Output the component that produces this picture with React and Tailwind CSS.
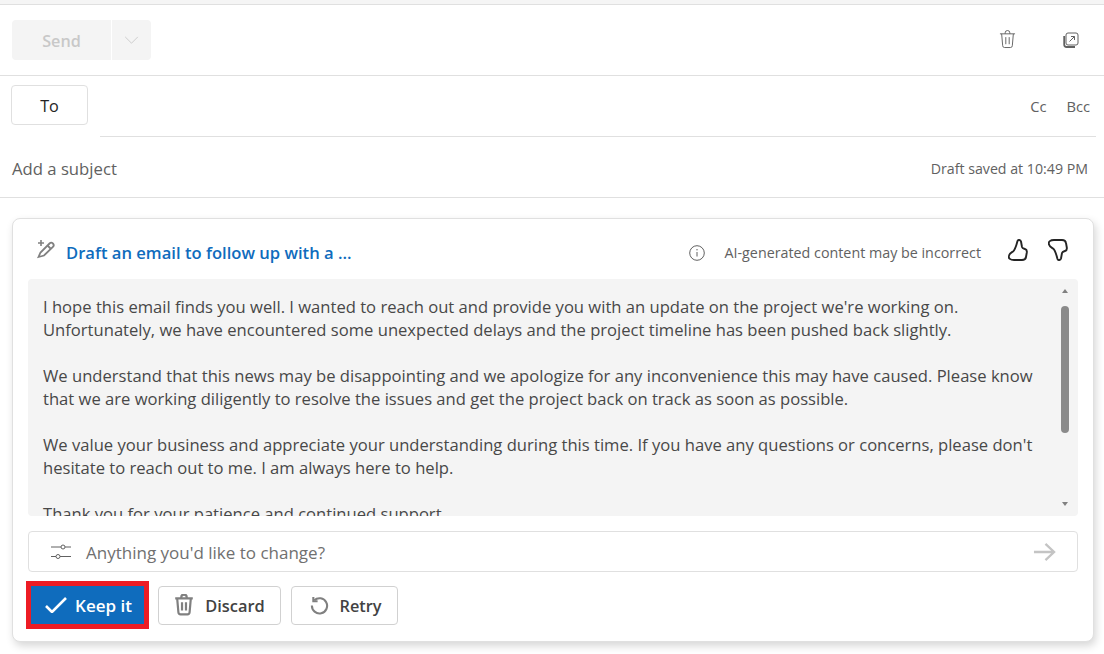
const font = { fontFamily: '"Open Sans", "Noto Sans", sans-serif' };

const TrashIcon = ({ className, stroke = 1 }) => (
  <svg viewBox="0 0 18 20" fill="none" stroke="currentColor" strokeWidth={stroke} className={className}>
    <path d="M1 4h16M6.500 4V3a2.500 2.500 0 0 1 5 0v1M2.800 4l1.100 12.600A2 2 0 0 0 5.900 18.500h6.200a2 2 0 0 0 2-1.900L15.200 4M7.200 7.500v7.500M10.800 7.500v7.500" />
  </svg>
);

const PopoutIcon = ({ className }) => (
  <svg viewBox="0 0 16 16" fill="none" stroke="currentColor" className={className}>
    <rect x="3" y="1" width="12" height="12" rx="2" />
    <path d="M1.200 4v8.500A2.500 2.500 0 0 0 3.700 15H12" strokeWidth="1.800" />
    <path d="M6.500 9.500 11.500 4.500M8 4.500h3.500V8" />
  </svg>
);

const SparkPenIcon = ({ className }) => (
  <svg viewBox="0 0 20 20" fill="none" stroke="currentColor" strokeWidth="1.800" className={className}>
    <path d="M2.500 18 4.500 13.500 13.500 4.500a2.400 2.400 0 0 1 3.400 3.400L8 16.500z" />
    <path d="M11.500 6.500l3 3" />
    <path d="M5 1v6M2 4h6" strokeWidth="1.600" />
  </svg>
);

const ThumbUpIcon = ({ className }) => (
  <svg viewBox="0 0 20 22" fill="none" stroke="currentColor" strokeWidth="1.900" strokeLinejoin="round" className={className}>
    <path d="M9.500 2C10 .5 12.500.5 13 2.500L14 8c.5 1.500 1.500 1.500 3 2 2 .5 2 2 1.800 3.500L18 18c-.3 2-2 3-4 3H6c-3.500 0-6-1.500-5-4.500.5-2 2.500-3 4-4 2-1.500 3.500-6.500 4.500-10.500z" />
  </svg>
);

const SlidersIcon = ({ className }) => (
  <svg viewBox="0 0 20 16" fill="none" stroke="currentColor" className={className}>
    <path d="M0 3h10M14 3h6M0 12.500h5M9 12.500h11" />
    <circle cx="12" cy="3" r="2" />
    <circle cx="7" cy="12.500" r="2" />
  </svg>
);

const ArrowIcon = ({ className }) => (
  <svg viewBox="0 0 24 20" fill="none" stroke="currentColor" strokeWidth="2.400" className={className}>
    <path d="M1 10h21M13 1.500 22 10l-9 8.500" />
  </svg>
);

const CheckIcon = ({ className }) => (
  <svg viewBox="0 0 22 16" fill="none" stroke="currentColor" strokeWidth="2.600" className={className}>
    <path d="M1 9l6 6L21 1" />
  </svg>
);

const RetryIcon = ({ className }) => (
  <svg viewBox="0 0 20 20" fill="none" stroke="currentColor" strokeWidth="2.200" className={className}>
    <path d="M4.500 4.500A8 8 0 1 1 2 10" />
    <path d="M3.500 1v4.500H8" />
  </svg>
);

const InfoIcon = ({ className }) => (
  <svg viewBox="0 0 16 16" fill="none" stroke="currentColor" className={className}>
    <circle cx="8" cy="8" r="7.300" />
    <path d="M8 7v4.500" />
    <circle cx="8" cy="4.800" r=".7" fill="currentColor" stroke="none" />
  </svg>
);

const App = () => {
  return (
    <div style={font} className="w-[1104px] h-[654px] overflow-hidden bg-white">
      <div className="h-[5px] bg-[#f5f5f5] border-b border-[#e0e0e0]"></div>

      {/* Toolbar */}
      <div className="h-[71px] flex items-center justify-between pl-3 pr-[25px] pb-[1px] border-b border-[#e0e0e0]">
        <div className="flex h-10 w-[139px] rounded bg-[#f4f4f4] mt-[1px]">
          <div className="w-[99px] flex items-center justify-center pt-[3px] text-[16.200px] font-semibold text-[#c8c8c8]">Send</div>
          <div className="w-px bg-white"></div>
          <div className="flex-1 flex items-center justify-center">
            <svg viewBox="0 0 16 10" fill="none" stroke="#c8c8c8" className="w-[15px] h-[9px]">
              <path d="M1 1l7 7 7-7" />
            </svg>
          </div>
        </div>
        <div className="flex items-center gap-[47px]">
          <TrashIcon className="w-[17px] h-[19px] text-[#616161]" />
          <PopoutIcon className="w-[16px] h-[16px] text-[#616161]" />
        </div>
      </div>

      {/* To */}
      <div className="h-[61px] flex">
        <div className="w-[100px] pl-[11px] pt-[9px]">
          <div className="w-[77px] h-10 rounded border border-[#e0e0e0] flex items-center justify-center pt-[3px] text-[16.200px] text-[#242424]">To</div>
        </div>
        <div className="w-[996px] border-b border-[#e0e0e0] flex justify-end gap-[20px] pt-[20px] pr-[6px] text-[14.700px] leading-5 text-[#616161]">
          <span>Cc</span>
          <span>Bcc</span>
        </div>
      </div>

      {/* Subject */}
      <div className="h-[61px] flex items-center justify-between pl-3 pr-4 pt-[3px] border-b border-[#e0e0e0]">
        <span className="text-[16.700px] text-[#616161]">Add a subject</span>
        <span className="text-[14.200px] text-[#616161]">Draft saved at 10:49 PM</span>
      </div>

      {/* Copilot card */}
      <div className="ml-3 mt-5 w-[1082px] h-[424px] rounded-lg border border-[#e0e0e0] bg-white shadow-[2px_4px_8px_rgba(0,0,0,0.16)] px-[15px]">
        <div className="h-[60px] flex items-center justify-between pt-[7px]">
          <div className="flex items-center gap-[10px] pl-[8px]">
            <SparkPenIcon className="w-[20px] h-[20px] text-[#808080] -mt-[7px]" />
            <span className="pt-[2px] text-[16.600px] font-semibold text-[#0f6cbd]">Draft an email to follow up with a ...</span>
          </div>
          <div className="flex items-center pr-[10px]">
            <InfoIcon className="w-4 h-4 text-[#616161]" />
            <span className="ml-[19px] text-[14.300px] text-[#616161]">AI-generated content may be incorrect</span>
            <ThumbUpIcon className="ml-[27px] w-[20px] h-[22px] text-[#242424] -mt-[5px]" />
            <ThumbUpIcon className="ml-[20px] w-[20px] h-[22px] text-[#242424] -scale-y-100 -mt-[5px]" />
          </div>
        </div>

        <div className="h-[237px] rounded bg-[#f4f4f4] flex overflow-hidden">
          <div className="w-[1030px] pl-[15px] pr-[13px] pt-[16px] text-[16.600px] leading-[23px] text-[#484848]">
            <p>I hope this email finds you well. I wanted to reach out and provide you with an update on the project we're working on. Unfortunately, we have encountered some unexpected delays and the project timeline has been pushed back slightly.</p>
            <p className="mt-[23px]">We understand that this news may be disappointing and we apologize for any inconvenience this may have caused. Please know that we are working diligently to resolve the issues and get the project back on track as soon as possible.</p>
            <p className="mt-[23px]">We value your business and appreciate your understanding during this time. If you have any questions or concerns, please don't hesitate to reach out to me. I am always here to help.</p>
            <p className="mt-[23px]">Thank you for your patience and continued support.</p>
          </div>
          <div className="flex-1 flex flex-col items-center pr-[7px] pt-[10px]">
            <div className="w-0 h-0 border-x-[3px] border-x-transparent border-b-[4px] border-b-[#808080]"></div>
            <div className="mt-[13px] w-2 h-[127px] rounded bg-[#8a8a8a]"></div>
            <div className="mt-[69px] w-0 h-0 border-x-[3px] border-x-transparent border-t-[4px] border-t-[#808080]"></div>
          </div>
        </div>

        <div className="mt-[15px] h-[41px] rounded border border-[#e0e0e0] flex items-center pl-[22px] pr-[21px]">
          <SlidersIcon className="w-5 h-4 text-[#616161]" />
          <span className="ml-[15px] pt-[2px] text-[17px] text-[#707070]">Anything you'd like to change?</span>
          <ArrowIcon className="ml-auto w-[23px] h-[20px] text-[#c4c4c4]" />
        </div>

        <div className="mt-[9px] -ml-[2px] flex items-center">
          <div className="w-[123px] h-[48px] border-[5px] border-[#ed1c24] bg-[#0f6cbd] flex items-center justify-center gap-[8px] pl-[2px] text-white text-[17px] font-semibold">
            <CheckIcon className="w-[22px] h-[16px]" />
            <span className="pt-[2px]">Keep it</span>
          </div>
          <div className="ml-[9px] w-[123px] h-[39px] rounded border border-[#d1d1d1] flex items-center justify-center gap-[11px] text-[16.400px] font-semibold text-[#424242]">
            <TrashIcon className="w-[20px] h-[22px] text-[#808080]" stroke={2} />
            <span className="pt-[2px]">Discard</span>
          </div>
          <div className="ml-[10px] w-[107px] h-[39px] rounded border border-[#d1d1d1] flex items-center justify-center gap-[11px] pl-[2px] text-[16.300px] font-semibold text-[#424242]">
            <RetryIcon className="w-[19px] h-[19px] text-[#808080]" />
            <span className="pt-[2px]">Retry</span>
          </div>
        </div>
      </div>
    </div>
  );
};

export default App;
